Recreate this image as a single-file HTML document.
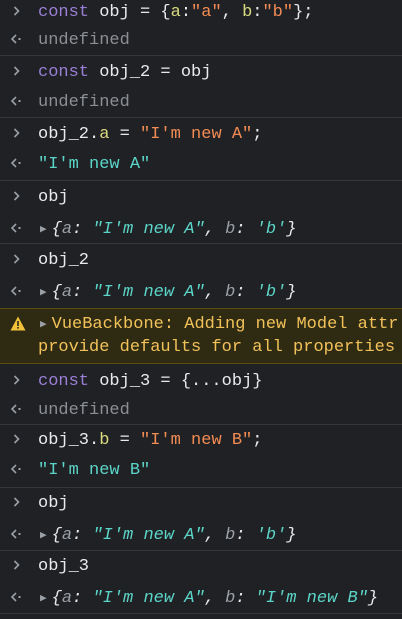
<!DOCTYPE html>
<html><head><style>
html,body{margin:0;padding:0;background:#202124;width:402px;height:619px;overflow:hidden}
body{position:relative;font-family:"Liberation Mono",monospace;font-size:17px;color:#e8eaed}
.l{position:absolute;left:38px;height:24px;line-height:24px;white-space:pre;margin-top:1px}
.p{position:absolute;left:10px;width:14px;height:24px;margin-top:-1px}
.sep{position:absolute;left:0;right:0;height:1px;background:#35363a}
.k{color:#9a7fd6}.y{color:#d9d97f}.o{color:#f28b54}.u{color:#8b8f94}
.t{color:#5bd5c8}.i{font-style:italic}.g{color:#9aa0a6}
.tri{font-size:11px;color:#9aa0a6;font-style:normal;margin-left:2px;margin-right:5px;vertical-align:1px}
.warn{position:absolute;left:0;right:0;top:308px;height:54px;background:#2f2a12;border-top:1px solid #5c4d10;border-bottom:1px solid #5c4d10}
.w{color:#f2c25a}
</style></head><body>
<svg width="0" height="0" style="position:absolute"><defs>
<symbol id="gt" viewBox="0 0 14 24"><path d="M4.5 8L8.5 12L4.5 16" fill="none" stroke="#9aa0a6" stroke-width="1.6"/></symbol>
<symbol id="lt" viewBox="0 0 14 24"><path d="M6 8L2 12L6 16" fill="none" stroke="#9aa0a6" stroke-width="1.6"/><rect x="8.5" y="11" width="2" height="2" fill="#9aa0a6"/></symbol>
</defs></svg>
<svg class="p" style="top:0"><use href="#gt"/></svg><div class="l" style="top:0"><span class="k">const</span> obj = {<span class="y">a</span>:<span class="o">"a"</span>, <span class="y">b</span>:<span class="o">"b"</span>};</div>
<svg class="p" style="top:28px"><use href="#lt"/></svg><div class="l u" style="top:28px">undefined</div>
<div class="sep" style="top:55px"></div>
<svg class="p" style="top:60px"><use href="#gt"/></svg><div class="l" style="top:60px"><span class="k">const</span> obj_2 = obj</div>
<svg class="p" style="top:90px"><use href="#lt"/></svg><div class="l u" style="top:90px">undefined</div>
<div class="sep" style="top:117px"></div>
<svg class="p" style="top:122px"><use href="#gt"/></svg><div class="l" style="top:122px">obj_2.<span class="y">a</span> = <span class="o">"I'm new A"</span>;</div>
<svg class="p" style="top:152px"><use href="#lt"/></svg><div class="l t" style="top:152px">"I'm new A"</div>
<div class="sep" style="top:180px"></div>
<svg class="p" style="top:185px"><use href="#gt"/></svg><div class="l" style="top:185px">obj</div>
<svg class="p" style="top:217px"><use href="#lt"/></svg><div class="l i" style="top:217px"><span class="tri">▶</span>{<span class="g">a</span>: <span class="t">"I'm new A"</span>, <span class="g">b</span>: <span class="t">'b'</span>}</div>
<div class="sep" style="top:243px"></div>
<svg class="p" style="top:248px"><use href="#gt"/></svg><div class="l" style="top:248px">obj_2</div>
<svg class="p" style="top:280px"><use href="#lt"/></svg><div class="l i" style="top:280px"><span class="tri">▶</span>{<span class="g">a</span>: <span class="t">"I'm new A"</span>, <span class="g">b</span>: <span class="t">'b'</span>}</div>
<div class="warn"></div>
<svg style="position:absolute;left:10px;top:316px" width="16" height="15" viewBox="0 0 16 15"><path d="M8 0.5L15.5 14.5H0.5Z" fill="#f2c33a"/><rect x="7.2" y="5" width="1.6" height="5" fill="#2f2a12"/><rect x="7.2" y="11" width="1.6" height="1.6" fill="#2f2a12"/></svg>
<div class="l w" style="top:312px"><span class="tri">▶</span>VueBackbone: Adding new Model attr</div>
<div class="l w" style="top:335px">provide defaults for all properties</div>
<svg class="p" style="top:369px"><use href="#gt"/></svg><div class="l" style="top:369px"><span class="k">const</span> obj_3 = {...obj}</div>
<svg class="p" style="top:398px"><use href="#lt"/></svg><div class="l u" style="top:398px">undefined</div>
<div class="sep" style="top:424px"></div>
<svg class="p" style="top:428px"><use href="#gt"/></svg><div class="l" style="top:428px">obj_3.<span class="y">b</span> = <span class="o">"I'm new B"</span>;</div>
<svg class="p" style="top:458px"><use href="#lt"/></svg><div class="l t" style="top:458px">"I'm new B"</div>
<div class="sep" style="top:487px"></div>
<svg class="p" style="top:491px"><use href="#gt"/></svg><div class="l" style="top:491px">obj</div>
<svg class="p" style="top:523px"><use href="#lt"/></svg><div class="l i" style="top:523px"><span class="tri">▶</span>{<span class="g">a</span>: <span class="t">"I'm new A"</span>, <span class="g">b</span>: <span class="t">'b'</span>}</div>
<div class="sep" style="top:550px"></div>
<svg class="p" style="top:554px"><use href="#gt"/></svg><div class="l" style="top:554px">obj_3</div>
<svg class="p" style="top:586px"><use href="#lt"/></svg><div class="l i" style="top:586px"><span class="tri">▶</span>{<span class="g">a</span>: <span class="t">"I'm new A"</span>, <span class="g">b</span>: <span class="t">"I'm new B"</span>}</div>
<div class="sep" style="top:613px"></div>
</body></html>
